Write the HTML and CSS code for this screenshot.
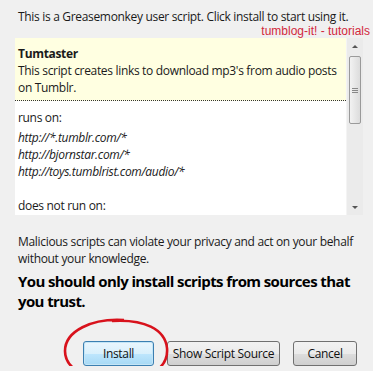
FILE: index.html
```html
<!DOCTYPE html>
<html lang="en">
<head>
    <meta charset="UTF-8">
    <title>Greasemonkey Installation</title>
    <link rel="stylesheet" href="styles.css">
</head>
<body>
    <div class="dialog">
        <p class="intro">This is a Greasemonkey user script. Click install to start using it.</p>
        <div class="credit">tumblog-it! - tutorials</div>

        <!-- Caixa com a descrição do script -->
        <div class="script-box">
            <div class="script-content">
                <div class="script-desc">
                    <div class="script-name">Tumtaster</div>
                    <div>This script creates links to download mp3's from audio posts on Tumblr.</div>
                </div>
                <div class="script-rules">
                    <div>runs on:</div>
                    <ul class="url-list">
                        <li>http://*.tumblr.com/*</li>
                        <li>http://bjornstar.com/*</li>
                        <li>http://toys.tumblrist.com/audio/*</li>
                        <li>&nbsp;</li>
                    </ul>
                    <div>does not run on:</div>
                </div>
            </div>
            <div class="scrollbar">
                <span class="arrow arrow-up"></span>
                <span class="thumb"><span class="grip"></span></span>
                <span class="arrow arrow-down"></span>
            </div>
        </div>

        <p class="warning">Malicious scripts can violate your privacy and act on your behalf without your knowledge.</p>
        <p class="warning-strong">You should only install scripts from sources that you trust.</p>

        <div class="buttons">
            <button type="button" class="btn btn-install">Install</button>
            <button type="button" class="btn btn-source">Show Script Source</button>
            <button type="button" class="btn btn-cancel">Cancel</button>
            <!-- Marcação vermelha desenhada à mão -->
            <svg class="circle-mark" width="110" height="66" viewBox="0 0 110 66">
                <path d="M62 3 C 30 1, 3 14, 3 34 C 3 54, 30 64, 56 64 C 84 64, 107 52, 105 31 C 103 12, 82 2, 50 4" fill="none" stroke="#d8121c" stroke-width="2.6"/>
            </svg>
        </div>
    </div>
</body>
</html>
```

FILE: styles.css
```css
html, body {
    margin: 0;
    padding: 0;
    background-color: #f0f0f0;
}

body {
    font-family: "Open Sans", "Noto Sans", Arial, sans-serif;
    font-size: 12px;
    line-height: 17px;
    letter-spacing: -0.32px;
    color: #1a1a1a;
    overflow: hidden;
}

.dialog {
    padding: 8px 0 0 15px;
    width: 348px;
}

.intro {
    margin: 0 0 0 3px;
    white-space: nowrap;
}

.credit {
    font-family: "Liberation Sans", Arial, sans-serif;
    font-size: 12px;
    line-height: 13px;
    letter-spacing: 0;
    color: #d2283c;
    text-align: right;
    margin-right: -7px;
}

/* Caixa da descrição */
.script-box {
    display: flex;
    height: 177px;
    background-color: #fff;
}

.script-content {
    flex: 1;
    overflow: hidden;
}

.script-desc {
    background-color: #ffffe1;
    padding: 7px 2px 4px 3px;
    border-bottom: 1px dotted #333;
}

.script-name {
    font-weight: bold;
}

.script-rules {
    padding: 8px 3px 0 3px;
}

.url-list {
    list-style: none;
    margin: 3px 0 0 0;
    padding: 0;
    font-style: italic;
}

/* Barra de rolagem */
.scrollbar {
    width: 16px;
    background-color: #ebebeb;
    border-left: 1px solid #f4f4f4;
    display: flex;
    flex-direction: column;
    align-items: center;
}

.arrow {
    width: 0;
    height: 0;
    border-left: 3px solid transparent;
    border-right: 3px solid transparent;
}

.arrow-up {
    border-bottom: 3px solid #555;
    margin-top: 7px;
}

.arrow-down {
    border-top: 3px solid #555;
    margin-top: auto;
    margin-bottom: 6px;
}

.thumb {
    width: 12px;
    height: 68px;
    margin-top: 8px;
    border: 1px solid #9a9a9a;
    border-radius: 2px;
    background: linear-gradient(to right, #f2f2f2, #dcdcdc);
    display: flex;
    align-items: center;
    justify-content: center;
    box-sizing: border-box;
}

.grip {
    width: 6px;
    height: 5px;
    border-top: 1px solid #888;
    border-bottom: 1px solid #888;
    position: relative;
    box-sizing: border-box;
}

.grip::after {
    content: "";
    position: absolute;
    left: 0;
    right: 0;
    top: 1px;
    border-top: 1px solid #888;
}

.warning {
    margin: 18px 0 0 3px;
    line-height: 17px;
}

.warning-strong {
    margin: 4px 0 0 3px;
    font-size: 15px;
    line-height: 20px;
    letter-spacing: -0.6px;
    font-weight: bold;
    color: #000;
}

/* Botões */
.buttons {
    position: relative;
    display: flex;
    justify-content: flex-end;
    gap: 13px;
    margin-top: 30px;
    margin-right: 6px;
}

.btn {
    font-family: inherit;
    font-size: 12px;
    letter-spacing: -0.32px;
    height: 25px;
    padding: 0;
    flex: none;
    border: 1px solid #707070;
    border-radius: 3px;
    background: linear-gradient(to bottom, #f2f2f2 0%, #ebebeb 50%, #dddddd 51%, #cfcfcf 100%);
    color: #111;
}

.btn-install {
    width: 71px;
    border-color: #3c7fb1;
    background: linear-gradient(to bottom, #eaf6fd 0%, #d9f0fc 50%, #bee6fd 51%, #a7d9f5 100%);
    box-shadow: inset 0 0 0 1px #c4e5f6;
}

.btn-source {
    width: 113px;
}

.btn-cancel {
    width: 64px;
}

.circle-mark {
    position: absolute;
    left: 47px;
    top: -24px;
}
```
